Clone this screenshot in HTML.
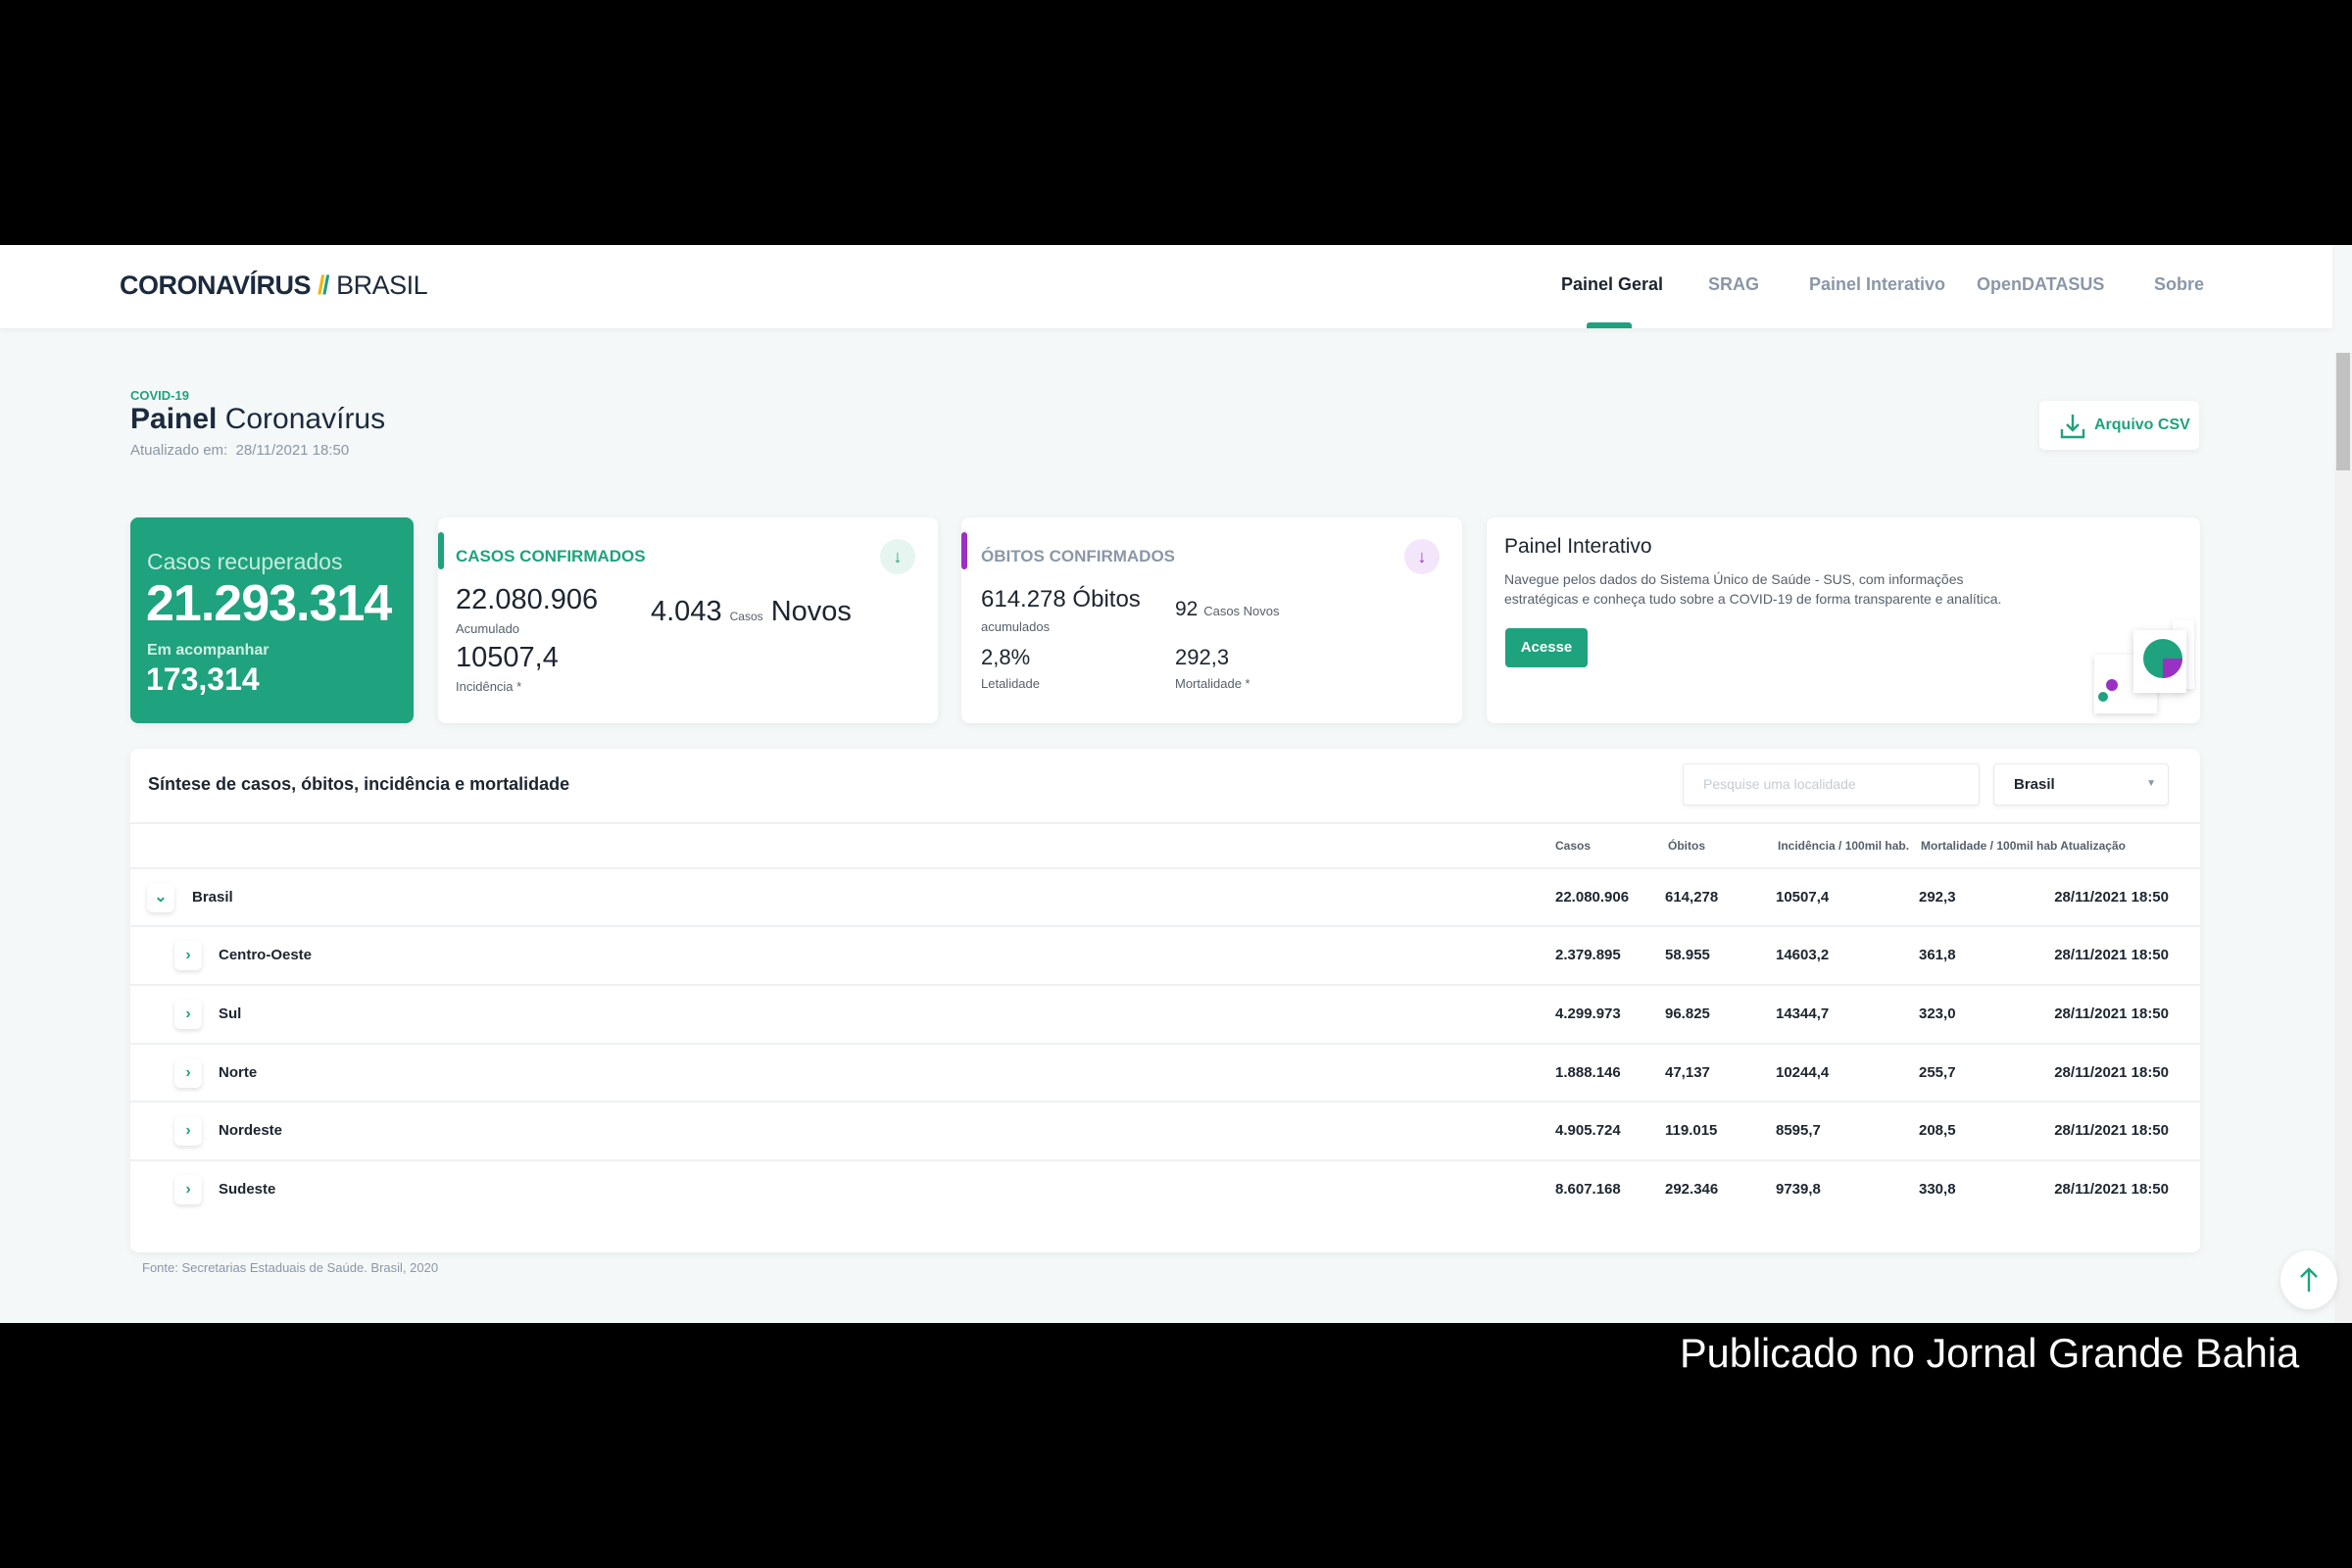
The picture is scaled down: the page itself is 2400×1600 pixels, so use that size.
<!DOCTYPE html>
<html><head><meta charset="utf-8">
<style>
*{box-sizing:border-box;margin:0;padding:0}
body{width:2400px;height:1600px;background:#000;position:relative;overflow:hidden;font-family:"Liberation Sans",sans-serif;color:#1c2530}
.abs{position:absolute}
#page{position:absolute;left:0;top:250px;width:2400px;height:1100px;background:#f4f8f8;overflow:hidden}
#hdr{position:absolute;left:0;top:0;width:2380px;height:85px;background:#fff;box-shadow:0 2px 6px rgba(0,0,0,.05)}
.nav{position:absolute;top:30px;font-size:18px;font-weight:bold;color:#8a97a8}
.card{position:absolute;background:#fff;border-radius:8px;box-shadow:0 2px 8px rgba(0,0,0,.06)}
.lbl{font-size:13px;color:#55606c}
.row{position:absolute;left:133px;width:2112px;height:59px;border-top:2px solid #eef1f3;font-size:15px;font-weight:bold}
.row span{position:absolute;top:20px}
.row span.d{left:auto;right:32px}
.chev{position:absolute;top:14px;width:28px;height:30px;border-radius:6px;background:#fff;box-shadow:0 2px 5px rgba(0,0,0,.12);color:#1fa27e;font-size:16px;text-align:center;line-height:30px}
</style></head><body>
<div id="page">
 <div id="hdr">
  <div class="abs" style="left:122px;top:26px;font-size:27px;letter-spacing:-.5px"><b style="color:#1b2a3d">CORONAVÍRUS</b> <b style="color:#f2b705">/</b><b style="color:#1fa27e;margin-left:-2px">/</b> <span style="color:#1b2a3d">BRASIL</span></div>
  <div class="nav" style="left:1593px;color:#1c2530">Painel Geral</div>
  <div class="nav" style="left:1743px">SRAG</div>
  <div class="nav" style="left:1846px">Painel Interativo</div>
  <div class="nav" style="left:2017px">OpenDATASUS</div>
  <div class="nav" style="left:2198px">Sobre</div>
  <div class="abs" style="left:1619px;top:79px;width:46px;height:6px;background:#1fa27e;border-radius:3px 3px 0 0"></div>
 </div>
 <div class="abs" style="left:2382px;top:110px;width:18px;height:990px;background:#f1f1f1"></div>
 <div class="abs" style="left:2384px;top:110px;width:14px;height:120px;background:#c1c1c1"></div>

 <div class="abs" style="left:133px;top:146px;font-size:13px;font-weight:bold;color:#1fa27e">COVID-19</div>
 <div class="abs" style="left:133px;top:161px;font-size:30px;color:#1b2a3d"><b>Painel</b> Coronavírus</div>
 <div class="abs" style="left:133px;top:201px;font-size:15px;color:#8a97a8">Atualizado em:&nbsp; 28/11/2021 18:50</div>
 <div class="card" style="left:2081px;top:159px;width:163px;height:50px;border-radius:6px">
  <svg class="abs" style="left:20px;top:12px" width="28" height="28" viewBox="0 0 28 28" fill="none" stroke="#1fa27e" stroke-width="2.4"><path d="M14 2v16M8 12l6 6 6-6M3 17v8h22v-8"/></svg>
  <div class="abs" style="left:56px;top:16px;font-size:16px;font-weight:bold;color:#1fa27e">Arquivo CSV</div>
 </div>

 <div class="card" style="left:133px;top:278px;width:289px;height:210px;background:#1fa27e;color:#fff">
  <div class="abs" style="left:17px;top:32px;font-size:23px;color:#c6ece0">Casos recuperados</div>
  <div class="abs" style="left:16px;top:58px;font-size:52px;font-weight:bold;letter-spacing:-1px">21.293.314</div>
  <div class="abs" style="left:17px;top:127px;font-size:16px;font-weight:bold;color:#d0f0e6">Em acompanhar</div>
  <div class="abs" style="left:16px;top:147px;font-size:32px;font-weight:bold">173,314</div>
 </div>

 <div class="card" style="left:447px;top:278px;width:510px;height:210px">
  <div class="abs" style="left:0;top:15px;width:6px;height:38px;background:#1fa27e;border-radius:3px"></div>
  <div class="abs" style="left:18px;top:30px;font-size:17px;font-weight:bold;color:#1fa27e">CASOS CONFIRMADOS</div>
  <div class="abs" style="left:451px;top:22px;width:36px;height:36px;border-radius:50%;background:#e6f5f0;color:#1fa27e;text-align:center;line-height:36px;font-size:18px">↓</div>
  <div class="abs" style="left:18px;top:68px;font-size:29px">22.080.906</div>
  <div class="abs lbl" style="left:18px;top:106px">Acumulado</div>
  <div class="abs" style="left:217px;top:80px;font-size:29px">4.043 <span style="font-size:12px;color:#55606c">Casos</span> Novos</div>
  <div class="abs" style="left:18px;top:127px;font-size:29px">10507,4</div>
  <div class="abs lbl" style="left:18px;top:165px">Incidência *</div>
 </div>

 <div class="card" style="left:981px;top:278px;width:511px;height:210px">
  <div class="abs" style="left:0;top:15px;width:6px;height:38px;background:#9b30c4;border-radius:3px"></div>
  <div class="abs" style="left:20px;top:30px;font-size:17px;font-weight:bold;color:#8a97a8">ÓBITOS CONFIRMADOS</div>
  <div class="abs" style="left:452px;top:22px;width:36px;height:36px;border-radius:50%;background:#f4e6fa;color:#9b30c4;text-align:center;line-height:36px;font-size:18px">↓</div>
  <div class="abs" style="left:20px;top:70px;font-size:24px">614.278 Óbitos</div>
  <div class="abs lbl" style="left:20px;top:104px">acumulados</div>
  <div class="abs" style="left:218px;top:82px;font-size:21px">92 <span style="font-size:13px;color:#55606c">Casos Novos</span></div>
  <div class="abs" style="left:20px;top:130px;font-size:22px">2,8%</div>
  <div class="abs lbl" style="left:20px;top:162px">Letalidade</div>
  <div class="abs" style="left:218px;top:130px;font-size:22px">292,3</div>
  <div class="abs lbl" style="left:218px;top:162px">Mortalidade *</div>
 </div>

 <div class="card" style="left:1517px;top:278px;width:728px;height:210px;overflow:visible">
  <div class="abs" style="left:18px;top:18px;font-size:21px">Painel Interativo</div>
  <div class="abs" style="left:18px;top:53px;width:525px;font-size:14px;line-height:20px;color:#55606c">Navegue pelos dados do Sistema Único de Saúde - SUS, com informações estratégicas e conheça tudo sobre a COVID-19 de forma transparente e analítica.</div>
  <div class="abs" style="left:19px;top:113px;width:84px;height:40px;background:#1fa27e;border-radius:4px;color:#fff;font-size:15px;font-weight:bold;text-align:center;line-height:40px">Acesse</div>
  <div class="abs" style="left:620px;top:140px;width:64px;height:60px;background:#fff;box-shadow:0 2px 6px rgba(0,0,0,.15)"></div>
  <div class="abs" style="left:632px;top:165px;width:12px;height:12px;border-radius:50%;background:#9b30c4"></div>
  <div class="abs" style="left:624px;top:178px;width:10px;height:10px;border-radius:50%;background:#1fa27e"></div>
  <div class="abs" style="left:700px;top:105px;width:22px;height:70px;background:#fff;box-shadow:0 2px 6px rgba(0,0,0,.12)"></div>
  <div class="abs" style="left:660px;top:115px;width:54px;height:64px;background:#fff;box-shadow:0 2px 8px rgba(0,0,0,.18)"></div>
  <svg class="abs" style="left:668px;top:122px" width="44" height="44" viewBox="0 0 44 44"><circle cx="22" cy="22" r="20" fill="#1fa27e"/><path d="M22 22h20A20 20 0 0 1 22 42z" fill="#9b30c4"/></svg>
 </div>

 <div class="card" style="left:133px;top:514px;width:2112px;height:514px"></div>
 <div class="abs" style="left:151px;top:540px;font-size:18px;font-weight:bold;color:#1c2530">Síntese de casos, óbitos, incidência e mortalidade</div>
 <div class="abs" style="left:1717px;top:529px;width:303px;height:43px;background:#fff;border:1px solid #e6eaee;border-radius:4px;box-shadow:0 2px 4px rgba(0,0,0,.05);font-size:14px;color:#c5ccd4;padding:12px 20px">Pesquise uma localidade</div>
 <div class="abs" style="left:2034px;top:529px;width:179px;height:43px;background:#fff;border:1px solid #e6eaee;border-radius:4px;box-shadow:0 2px 4px rgba(0,0,0,.05);font-size:15px;font-weight:bold;padding:12px 20px">Brasil<span style="position:absolute;right:12px;top:14px;font-size:10px;color:#8a97a8">▼</span></div>
 <div class="row" style="top:589px;height:46px;font-size:12px;font-weight:bold;color:#55606c">
  <span style="left:1454px;top:15px">Casos</span><span style="left:1569px;top:15px">Óbitos</span><span style="left:1681px;top:15px">Incidência / 100mil hab.</span><span style="left:1827px;top:15px">Mortalidade / 100mil hab Atualização</span>
 </div>
 <div class="row" style="top:635px"><div class="chev" style="left:17px">⌄</div><span style="left:63px">Brasil</span><span style="left:1454px">22.080.906</span><span style="left:1566px">614,278</span><span style="left:1679px">10507,4</span><span style="left:1825px">292,3</span><span class="d">28/11/2021 18:50</span></div>
 <div class="row" style="top:694px"><div class="chev" style="left:45px">›</div><span style="left:90px">Centro-Oeste</span><span style="left:1454px">2.379.895</span><span style="left:1566px">58.955</span><span style="left:1679px">14603,2</span><span style="left:1825px">361,8</span><span class="d">28/11/2021 18:50</span></div>
 <div class="row" style="top:754px"><div class="chev" style="left:45px">›</div><span style="left:90px">Sul</span><span style="left:1454px">4.299.973</span><span style="left:1566px">96.825</span><span style="left:1679px">14344,7</span><span style="left:1825px">323,0</span><span class="d">28/11/2021 18:50</span></div>
 <div class="row" style="top:814px"><div class="chev" style="left:45px">›</div><span style="left:90px">Norte</span><span style="left:1454px">1.888.146</span><span style="left:1566px">47,137</span><span style="left:1679px">10244,4</span><span style="left:1825px">255,7</span><span class="d">28/11/2021 18:50</span></div>
 <div class="row" style="top:873px"><div class="chev" style="left:45px">›</div><span style="left:90px">Nordeste</span><span style="left:1454px">4.905.724</span><span style="left:1566px">119.015</span><span style="left:1679px">8595,7</span><span style="left:1825px">208,5</span><span class="d">28/11/2021 18:50</span></div>
 <div class="row" style="top:933px"><div class="chev" style="left:45px">›</div><span style="left:90px">Sudeste</span><span style="left:1454px">8.607.168</span><span style="left:1566px">292.346</span><span style="left:1679px">9739,8</span><span style="left:1825px">330,8</span><span class="d">28/11/2021 18:50</span></div>
 <div class="abs" style="left:145px;top:1036px;font-size:13px;color:#8a97a8">Fonte: Secretarias Estaduais de Saúde. Brasil, 2020</div>
 <div class="abs" style="left:2327px;top:1026px;width:58px;height:60px;border-radius:50%;background:#fff;box-shadow:0 2px 8px rgba(0,0,0,.1)">
  <svg class="abs" style="left:18px;top:16px" width="22" height="28" viewBox="0 0 22 28" fill="none" stroke="#1fa27e" stroke-width="2.4"><path d="M11 26V3M3 11l8-8 8 8"/></svg>
 </div>
</div>
<div class="abs" style="left:1714px;top:1357px;font-size:41.5px;color:#fff;white-space:nowrap">Publicado no Jornal Grande Bahia</div>
</body></html>
